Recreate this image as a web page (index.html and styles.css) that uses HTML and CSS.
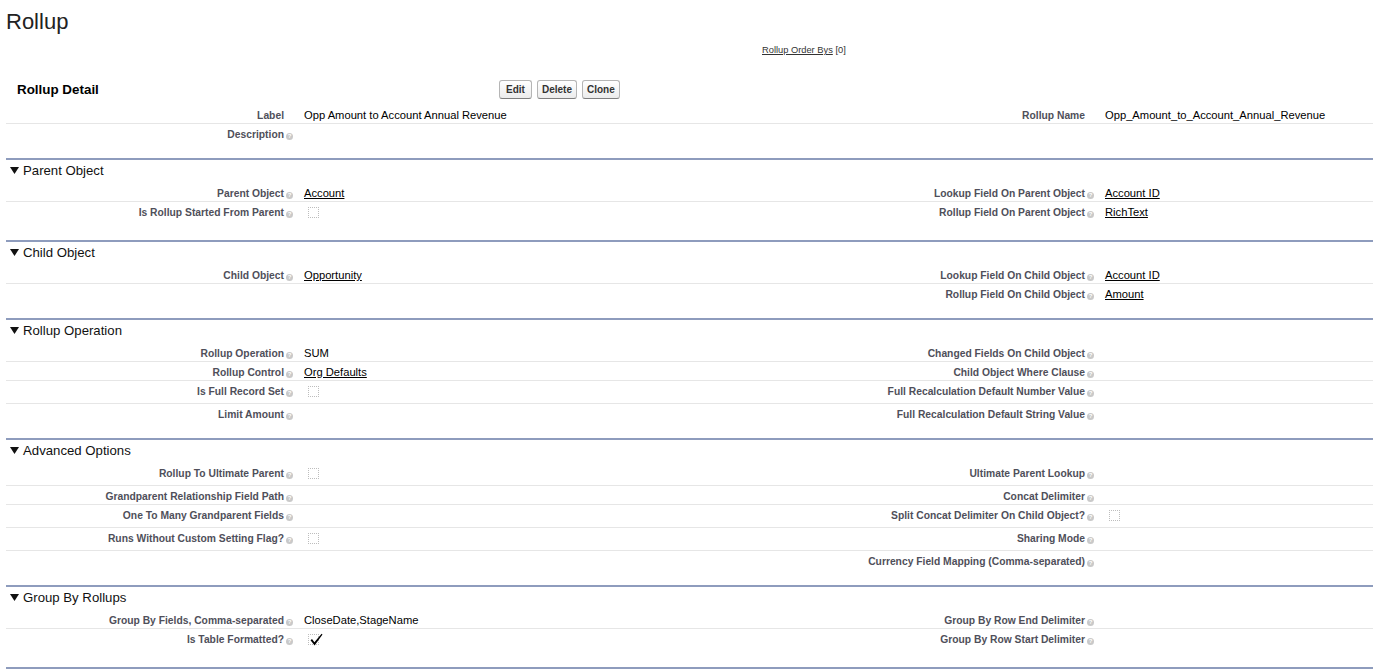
FILE: index.html
```html
<!DOCTYPE html>
<html lang="en">
<head>
    <meta charset="UTF-8">
    <title>Rollup</title>
    <link rel="stylesheet" href="styles.css">
</head>
<body>

    <h1 class="title">Rollup</h1>

    <!-- Related list links -->
    <div class="related"><a href="#">Rollup Order Bys</a> [0]</div>

    <!-- Detail header with buttons -->
    <div class="pb-header">
        <h2 class="pb-title">Rollup Detail</h2>
        <div class="buttons">
            <button class="btn btn-edit">Edit</button>
            <button class="btn">Delete</button>
            <button class="btn">Clone</button>
        </div>
    </div>

    <div class="sec-body">
        <div class="row">
            <div class="lbl">Label</div>
            <div class="val">Opp Amount to Account Annual Revenue</div>
            <div class="lbl">Rollup Name</div>
            <div class="val">Opp_Amount_to_Account_Annual_Revenue</div>
        </div>
        <div class="row">
            <div class="lbl">Description<span class="help">?</span></div>
            <div class="val"></div>
            <div class="lbl"></div>
            <div class="val"></div>
        </div>
    </div>

    <!-- Parent Object -->
    <div class="sec-head"><svg class="twisty" width="9" height="7" viewBox="0 0 9 7"><path d="M0 0 H9 L4.5 7 Z"/></svg>Parent Object</div>
    <div class="sec-body">
        <div class="row">
            <div class="lbl">Parent Object<span class="help">?</span></div>
            <div class="val"><a href="#">Account</a></div>
            <div class="lbl">Lookup Field On Parent Object<span class="help">?</span></div>
            <div class="val"><a href="#">Account ID</a></div>
        </div>
        <div class="row">
            <div class="lbl">Is Rollup Started From Parent<span class="help">?</span></div>
            <div class="val"><span class="cb"></span></div>
            <div class="lbl">Rollup Field On Parent Object<span class="help">?</span></div>
            <div class="val"><a href="#">RichText</a></div>
        </div>
    </div>

    <!-- Child Object -->
    <div class="sec-head"><svg class="twisty" width="9" height="7" viewBox="0 0 9 7"><path d="M0 0 H9 L4.5 7 Z"/></svg>Child Object</div>
    <div class="sec-body">
        <div class="row">
            <div class="lbl">Child Object<span class="help">?</span></div>
            <div class="val"><a href="#">Opportunity</a></div>
            <div class="lbl">Lookup Field On Child Object<span class="help">?</span></div>
            <div class="val"><a href="#">Account ID</a></div>
        </div>
        <div class="row">
            <div class="lbl"></div>
            <div class="val"></div>
            <div class="lbl">Rollup Field On Child Object<span class="help">?</span></div>
            <div class="val"><a href="#">Amount</a></div>
        </div>
    </div>

    <!-- Rollup Operation -->
    <div class="sec-head"><svg class="twisty" width="9" height="7" viewBox="0 0 9 7"><path d="M0 0 H9 L4.5 7 Z"/></svg>Rollup Operation</div>
    <div class="sec-body">
        <div class="row">
            <div class="lbl">Rollup Operation<span class="help">?</span></div>
            <div class="val">SUM</div>
            <div class="lbl">Changed Fields On Child Object<span class="help">?</span></div>
            <div class="val"></div>
        </div>
        <div class="row">
            <div class="lbl">Rollup Control<span class="help">?</span></div>
            <div class="val"><a href="#">Org Defaults</a></div>
            <div class="lbl">Child Object Where Clause<span class="help">?</span></div>
            <div class="val"></div>
        </div>
        <div class="row">
            <div class="lbl">Is Full Record Set<span class="help">?</span></div>
            <div class="val"><span class="cb"></span></div>
            <div class="lbl">Full Recalculation Default Number Value<span class="help">?</span></div>
            <div class="val"></div>
        </div>
        <div class="row">
            <div class="lbl">Limit Amount<span class="help">?</span></div>
            <div class="val"></div>
            <div class="lbl">Full Recalculation Default String Value<span class="help">?</span></div>
            <div class="val"></div>
        </div>
    </div>

    <!-- Advanced Options -->
    <div class="sec-head"><svg class="twisty" width="9" height="7" viewBox="0 0 9 7"><path d="M0 0 H9 L4.5 7 Z"/></svg>Advanced Options</div>
    <div class="sec-body">
        <div class="row">
            <div class="lbl">Rollup To Ultimate Parent<span class="help">?</span></div>
            <div class="val"><span class="cb"></span></div>
            <div class="lbl">Ultimate Parent Lookup<span class="help">?</span></div>
            <div class="val"></div>
        </div>
        <div class="row">
            <div class="lbl">Grandparent Relationship Field Path<span class="help">?</span></div>
            <div class="val"></div>
            <div class="lbl">Concat Delimiter<span class="help">?</span></div>
            <div class="val"></div>
        </div>
        <div class="row">
            <div class="lbl">One To Many Grandparent Fields<span class="help">?</span></div>
            <div class="val"></div>
            <div class="lbl">Split Concat Delimiter On Child Object?<span class="help">?</span></div>
            <div class="val"><span class="cb"></span></div>
        </div>
        <div class="row">
            <div class="lbl">Runs Without Custom Setting Flag?<span class="help">?</span></div>
            <div class="val"><span class="cb"></span></div>
            <div class="lbl">Sharing Mode<span class="help">?</span></div>
            <div class="val"></div>
        </div>
        <div class="row">
            <div class="lbl"></div>
            <div class="val"></div>
            <div class="lbl">Currency Field Mapping (Comma-separated)<span class="help">?</span></div>
            <div class="val"></div>
        </div>
    </div>

    <!-- Group By Rollups -->
    <div class="sec-head"><svg class="twisty" width="9" height="7" viewBox="0 0 9 7"><path d="M0 0 H9 L4.5 7 Z"/></svg>Group By Rollups</div>
    <div class="sec-body">
        <div class="row">
            <div class="lbl">Group By Fields, Comma-separated<span class="help">?</span></div>
            <div class="val">CloseDate,StageName</div>
            <div class="lbl">Group By Row End Delimiter<span class="help">?</span></div>
            <div class="val"></div>
        </div>
        <div class="row">
            <div class="lbl">Is Table Formatted?<span class="help">?</span></div>
            <div class="val">
                <span class="cb cb-checked">
                    <svg width="13" height="13" viewBox="0 0 13 13"><path d="M0.5 7.2 L2 6 L4.4 9.2 L11.6 0.8 L12.5 1.6 L4.6 12.4 Z"/></svg>
                </span>
            </div>
            <div class="lbl">Group By Row Start Delimiter<span class="help">?</span></div>
            <div class="val"></div>
        </div>
    </div>

    <div class="pb-bottom"></div>

</body>
</html>
```

FILE: styles.css
```css
html, body {
    margin: 0;
    overflow: hidden;
}

body {
    font-family: "Liberation Sans", Arial, sans-serif;
    color: #000;
    background-color: #fff;
    padding-left: 6px;
}

/* --- Page title --- */
.title {
    margin: 0;
    padding-top: 9px;
    font-size: 22px;
    line-height: 25px;
    font-weight: normal;
    color: #222;
}

.related {
    margin-top: 10px;
    padding-left: 756px;
    font-size: 9.3px;
    line-height: 13px;
    color: #333;
}
.related a { color: #333; }

/* --- Detail header --- */
.pb-header {
    display: flex;
    align-items: center;
    margin-top: 18px;
    padding: 5px 0 6px;
}
.pb-title {
    margin: 0;
    width: 493px;
    padding-left: 11px;
    box-sizing: border-box;
    font-size: 13.4px;
    font-weight: bold;
    color: #000;
}
.buttons { display: flex; gap: 5px; }

.btn {
    font-family: "Liberation Sans", Arial, sans-serif;
    font-size: 10px;
    font-weight: bold;
    color: #333;
    height: 19px;
    padding: 0 4px;
    border: 1px solid #b5b5b5;
    border-bottom-color: #7f7f7f;
    border-radius: 3px;
    background: linear-gradient(#ffffff, #ececec);
    cursor: pointer;
}
.btn-edit { min-width: 33px; }

/* --- Sections --- */
.sec-head {
    border-top: 2px solid #8e9cbd;
    padding: 3px 0 5px 4px;
    font-size: 13.2px;
    line-height: 15px;
    color: #111;
    display: flex;
    align-items: center;
}
.twisty {
    fill: #111;
    margin-right: 4px;
}

.sec-body { margin-bottom: 16px; }

.row {
    display: grid;
    grid-template-columns: 292px 1fr 400px 274px;
    border-bottom: 1px solid #e6e6e6;
}
.row:last-child { border-bottom: none; }

.lbl, .val {
    padding: 4px 0 1px;
    line-height: 13px;
}
.lbl {
    text-align: right;
    padding-right: 14px;
    font-size: 10.3px;
    font-weight: bold;
    color: #4f4f5a;
}
.val {
    padding-left: 6px;
    font-size: 11.2px;
}
.val a { color: #000; }

/* small help bubble hanging past the label */
.help {
    display: inline-block;
    width: 7px;
    height: 7px;
    margin-left: 2px;
    margin-right: -9px;
    border-radius: 50%;
    background-color: #c9c9c9;
    color: #fff;
    font-size: 6px;
    line-height: 7px;
    text-align: center;
    vertical-align: 0;
    font-weight: bold;
}

/* read-only checkbox */
.cb {
    display: block;
    width: 11px;
    height: 11px;
    margin: 1px 0 5px 4px;
    border: 1px dotted #bdbdbd;
    box-sizing: border-box;
    position: relative;
}
.cb-checked svg {
    position: absolute;
    left: 1px;
    top: -2px;
    fill: #000;
}

.pb-bottom {
    border-top: 2px solid #8e9cbd;
}
```
